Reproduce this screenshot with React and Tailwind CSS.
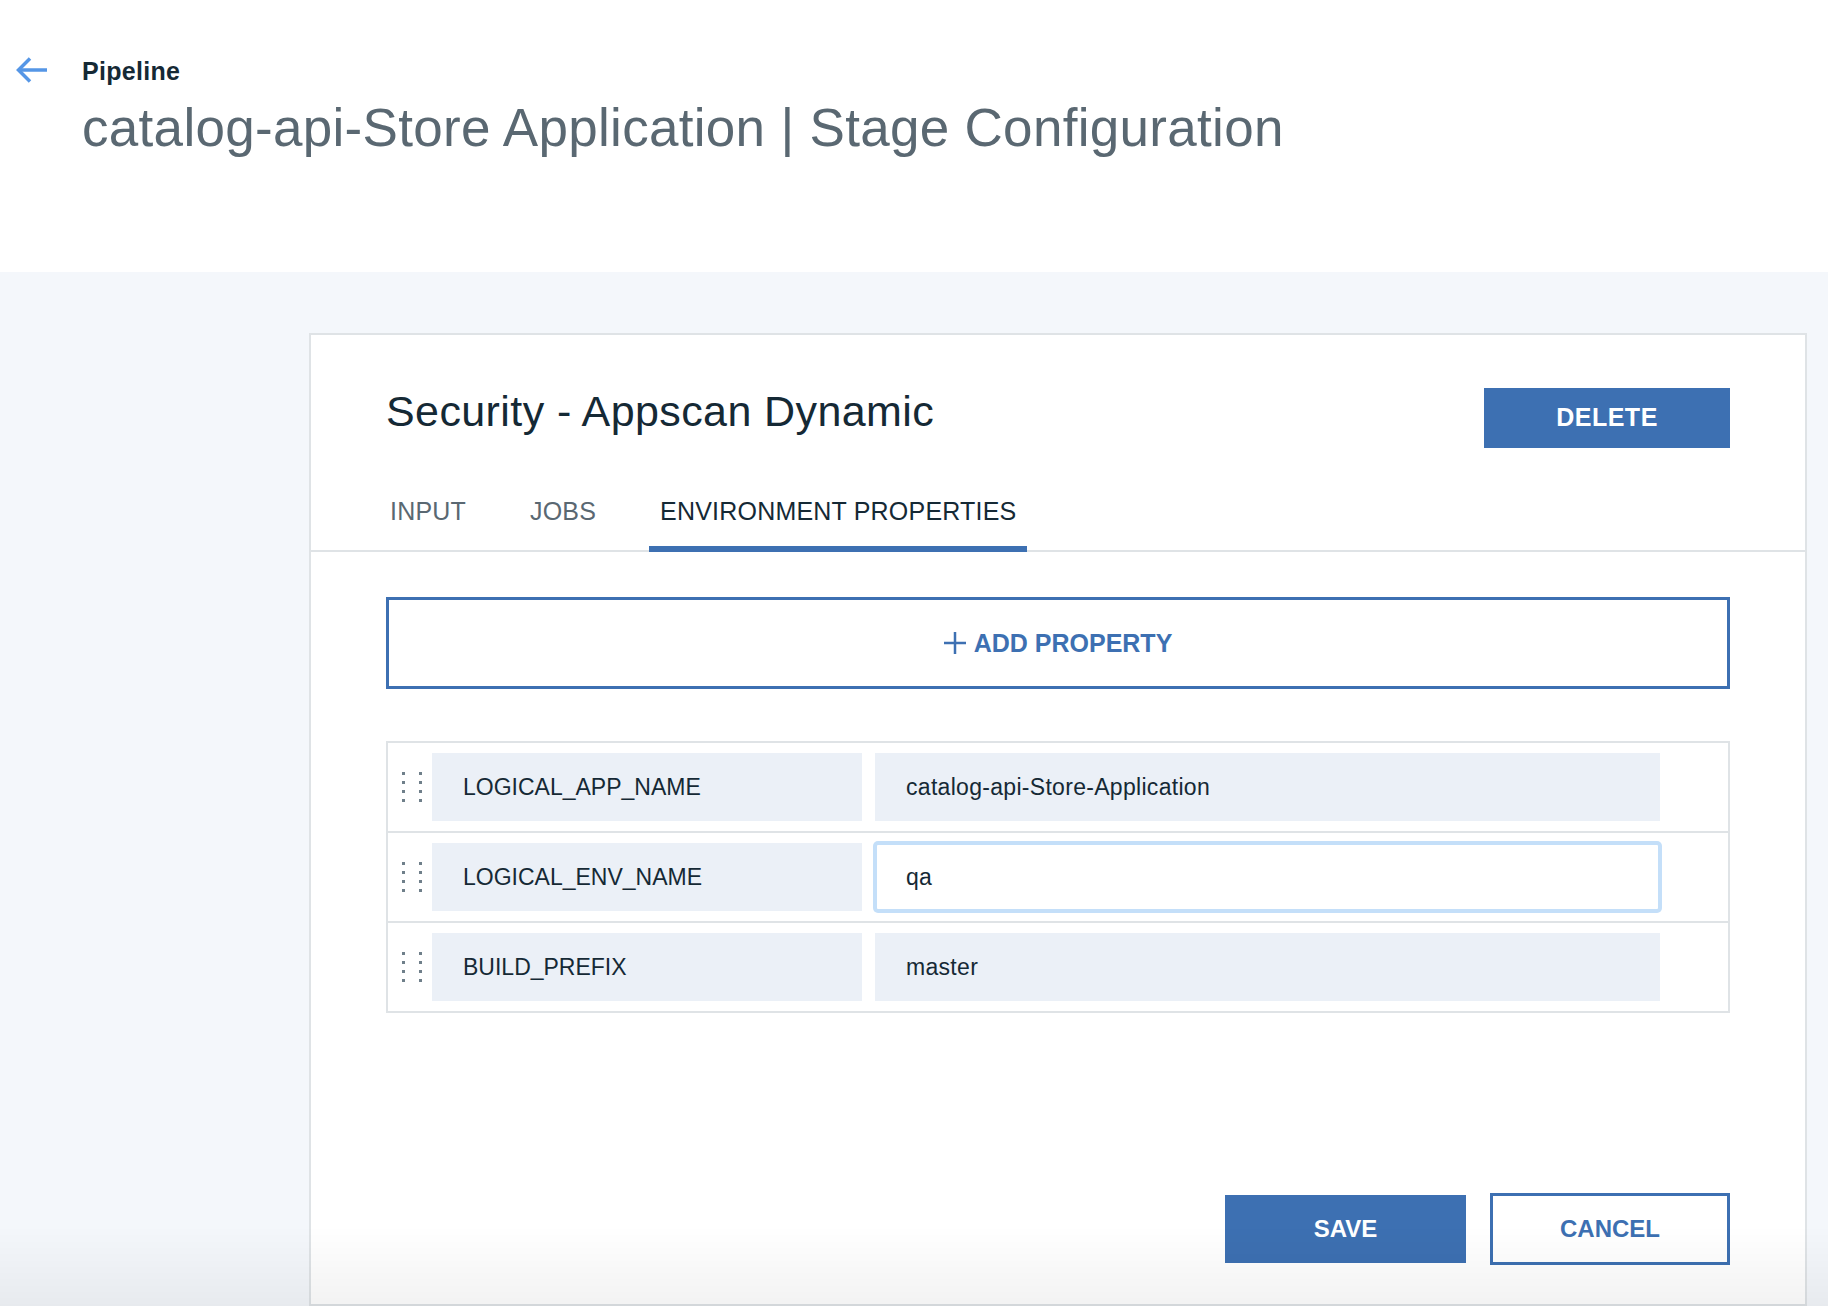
import { useState } from "react";

const rows = [
  { key: "LOGICAL_APP_NAME", value: "catalog-api-Store-Application" },
  { key: "LOGICAL_ENV_NAME", value: "qa", focused: true },
  { key: "BUILD_PREFIX", value: "master" },
];

const tabs = ["INPUT", "JOBS", "ENVIRONMENT PROPERTIES"];

function DragHandle() {
  return (
    <div className="grid grid-cols-2 gap-x-[4px] gap-y-[6px]">
      {Array.from({ length: 8 }).map((_, i) => (
        <span key={i} className="block w-[3px] h-[3px] bg-[#6f7f8a]" />
      ))}
    </div>
  );
}

export default function App() {
  const [active, setActive] = useState(2);

  return (
    <div className="min-h-screen bg-[#f4f7fb] font-['Liberation_Sans',Arial,sans-serif] relative overflow-hidden">
      {/* Header */}
      <header className="bg-white h-[272px] flex pt-[56px]">
        <div className="pl-[16px] w-[82px] shrink-0">
          <svg width="32" height="26" viewBox="0 0 32 26" className="mt-[1px]" fill="none">
            <path d="M2 13 H31" stroke="#5596e6" strokeWidth="3.5" />
            <path d="M14 1.5 L2.5 13 L14 24.5" stroke="#5596e6" strokeWidth="3.5" />
          </svg>
        </div>
        <div className="flex flex-col">
          <span className="text-[25px] leading-[30px] font-bold text-[#152935] tracking-[0.3px]">Pipeline</span>
          <h1 className="mt-[12px] text-[53px] leading-[60px] text-[#5a6872] font-normal tracking-[0.3px]">
            catalog-api-Store Application | Stage Configuration
          </h1>
        </div>
      </header>

      {/* Card */}
      <div className="ml-[309px] mt-[61px] w-[1498px] bg-white border-2 border-[#dfe3e6]">
        <div className="px-[75px] pt-[51px] flex justify-between items-start">
          <h2 className="text-[43px] leading-[50px] text-[#152935] font-normal tracking-[0.4px]">Security - Appscan Dynamic</h2>
          <button className="mt-[2px] w-[246px] h-[60px] bg-[#3d70b2] text-white font-bold text-[25px] tracking-[0.5px]">
            DELETE
          </button>
        </div>

        <div className="mt-[49px] border-b-2 border-[#dfe3e6] pl-[68px] flex gap-[42px]">
          {tabs.map((t, i) => (
            <button
              key={t}
              onClick={() => setActive(i)}
              className={
                i === active
                  ? "px-[11px] pb-[21px] -mb-[2px] border-b-[6px] border-[#3d70b2] text-[25px] leading-[28px] text-[#152935] tracking-[0.2px]"
                  : "px-[11px] pb-[21px] -mb-[2px] border-b-[6px] border-transparent text-[25px] leading-[28px] text-[#5a6872] tracking-[0.2px]"
              }
            >
              {t}
            </button>
          ))}
        </div>

        <div className="px-[75px] pt-[45px] pb-[39px]">
          <button className="w-full h-[92px] border-[3px] border-[#3d70b2] flex items-center justify-center gap-[8px] text-[#3d70b2]">
            <svg width="22" height="22" viewBox="0 0 22 22">
              <path d="M11 0 V22 M0 11 H22" stroke="#3d70b2" strokeWidth="2.5" />
            </svg>
            <span className="text-[25px] font-bold leading-none">ADD PROPERTY</span>
          </button>

          <div className="mt-[52px] border-2 border-[#dfe3e6] divide-y-2 divide-[#dfe3e6]">
            {rows.map((r) => (
              <div key={r.key} className="flex items-center py-[10px]">
                <div className="w-[44px] pl-[14px] shrink-0">
                  <DragHandle />
                </div>
                <div className="w-[430px] h-[68px] bg-[#ebf0f7] flex items-center pl-[31px] text-[23px] text-[#152935]">
                  {r.key}
                </div>
                <div
                  className={
                    r.focused
                      ? "ml-[13px] w-[785px] h-[68px] bg-white border-2 border-[#c4dff9] shadow-[0_0_0_2px_#c4dff9] rounded-[3px] flex items-center pl-[29px] text-[23px] tracking-[0.3px] text-[#152935]"
                      : "ml-[13px] w-[785px] h-[68px] bg-[#ebf0f7] flex items-center pl-[31px] text-[23px] tracking-[0.3px] text-[#152935]"
                  }
                >
                  {r.value}
                </div>
              </div>
            ))}
          </div>

          <div className="mt-[180px] flex justify-end items-center gap-[24px]">
            <button className="w-[241px] h-[68px] bg-[#3d70b2] text-white font-bold text-[24px]">SAVE</button>
            <button className="w-[240px] h-[72px] border-[3px] border-[#3d70b2] bg-white text-[#3d70b2] font-bold text-[24px]">
              CANCEL
            </button>
          </div>
        </div>
      </div>

      {/* bottom shade */}
      <div className="fixed bottom-0 inset-x-0 h-[80px] pointer-events-none bg-gradient-to-b from-transparent to-black/[0.05]" />
    </div>
  );
}
